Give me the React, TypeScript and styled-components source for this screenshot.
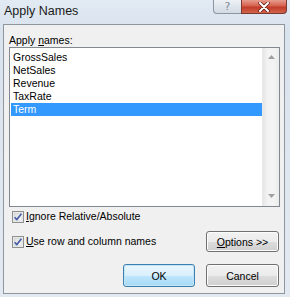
import React, { useState } from "react";
import styled, { createGlobalStyle } from "styled-components";

const GlobalStyle = createGlobalStyle`
  html, body {
    margin: 0;
    padding: 0;
    background: #ffffff;
  }
  * {
    box-sizing: border-box;
  }
`;

const names = ["GrossSales", "NetSales", "Revenue", "TaxRate", "Term"];

const Window = styled.div`
  width: 290px;
  height: 297px;
  display: flex;
  flex-direction: column;
  background: linear-gradient(180deg, #e2eaf3 0%, #d9e3ee 30px, #e3e9f0 100%);
  font-family: "Liberation Sans", Arial, sans-serif;
  font-size: 10.5px;
  color: #000;
`;

const TitleBar = styled.div`
  height: 24px;
  display: flex;
  justify-content: space-between;
  align-items: flex-start;
  flex-shrink: 0;
`;

const Title = styled.span`
  padding: 4px 0 0 4px;
  font-size: 12.5px;
  line-height: 15px;
  color: #1a1a1a;
`;

const CaptionButtons = styled.div`
  display: flex;
  margin-right: 3px;
`;

const HelpButton = styled.div`
  width: 28px;
  height: 14px;
  border: 1px solid #8c96a3;
  border-top: none;
  border-right: none;
  border-bottom-left-radius: 4px;
  background: linear-gradient(180deg, #eef2f6 0%, #dfe5ec 50%, #d2dae3 100%);
  color: #7d8996;
  font-size: 11px;
  line-height: 13px;
  text-align: center;
  font-family: "DejaVu Sans", sans-serif;
`;

const CloseButton = styled.div`
  width: 46px;
  height: 14px;
  border: 1px solid #7a3a33;
  border-top: none;
  border-bottom-right-radius: 4px;
  background: linear-gradient(180deg, #e69c8e 0%, #d6614f 45%, #c23b29 55%, #d0664d 100%);
  display: flex;
  align-items: center;
  justify-content: center;
`;

const Client = styled.div`
  flex: 1;
  margin: 0 5px 3px 3px;
  border: 1px solid #8e969f;
  background: #f0f0f0;
  padding: 9px 4px 0 5px;
  display: flex;
  flex-direction: column;
`;

const Label = styled.div`
  height: 13px;
  line-height: 13px;
`;

const Key = styled.span`
  text-decoration: underline;
  text-underline-offset: 1px;
`;

const ListBox = styled.div`
  height: 160px;
  border: 1px solid #828790;
  background: #ffffff;
  display: flex;
`;

const Items = styled.div`
  flex: 1;
  padding: 3px 0 0 1px;
`;

const Item = styled.div<{ $selected?: boolean }>`
  height: 13px;
  line-height: 13px;
  padding-left: 2px;
  background: ${(p) => (p.$selected ? "#3399ff" : "transparent")};
  color: ${(p) => (p.$selected ? "#ffffff" : "#000000")};
  cursor: default;
`;

const ScrollBar = styled.div`
  width: 17px;
  display: flex;
  flex-direction: column;
  justify-content: space-between;
  align-items: center;
  background: linear-gradient(90deg, #e6e6e6 0%, #f3f3f3 30%, #f3f3f3 70%, #ebebeb 100%);
  border-left: 1px solid #e9e9e9;
  padding: 7px 0 8px;
`;

const CheckRow = styled.div<{ $top: number }>`
  display: flex;
  align-items: center;
  justify-content: space-between;
  margin-top: ${(p) => p.$top}px;
  margin-right: 1px;
`;

const CheckLabel = styled.label`
  display: flex;
  align-items: center;
  gap: 2px;
  margin-left: 3px;
  height: 13px;
  line-height: 13px;
`;

const Button = styled.button<{ $default?: boolean; $h?: number; $w?: number }>`
  width: ${(p) => p.$w ?? 73}px;
  height: ${(p) => p.$h ?? 23}px;
  padding: 0;
  border: 1px solid ${(p) => (p.$default ? "#3c7fb1" : "#707070")};
  border-radius: 3px;
  background: ${(p) =>
    p.$default
      ? "linear-gradient(180deg, #eaf6fd 0%, #d9f0fc 50%, #bee6fd 51%, #a7d9f5 100%)"
      : "linear-gradient(180deg, #f2f2f2 0%, #ebebeb 50%, #dddddd 51%, #cfcfcf 100%)"};
  box-shadow: inset 0 0 0 1px ${(p) => (p.$default ? "#c4e5f6" : "#fcfcfc")};
  font-family: "Liberation Sans", Arial, sans-serif;
  font-size: 10.5px;
  color: #000;
`;

const ButtonRow = styled.div`
  display: flex;
  justify-content: flex-end;
  gap: 11px;
  margin-top: 12px;
  margin-right: 1px;
`;

const CheckBox = ({ checked }: { checked: boolean }) => (
  <svg width="12" height="12" viewBox="0 0 12 12">
    <defs>
      <linearGradient id="cbg" x1="0" y1="0" x2="1" y2="1">
        <stop offset="0" stopColor="#dcdcdc" />
        <stop offset="1" stopColor="#fbfbfb" />
      </linearGradient>
    </defs>
    <rect x="0.5" y="0.5" width="11" height="11" fill="#f4f4f4" stroke="#8e8f8f" />
    <rect x="2" y="2" width="8" height="8" fill="url(#cbg)" stroke="#c6c9cd" strokeWidth="0.6" />
    {checked && (
      <path d="M2.6 6.2 L4.8 8.6 L9.4 2.8" fill="none" stroke="#4a62a8" strokeWidth="1.7" strokeLinejoin="round" />
    )}
  </svg>
);

const Arrow = ({ up }: { up?: boolean }) => (
  <svg width="7" height="4" viewBox="0 0 7 4">
    <path d={up ? "M0 4 L3.5 0 L7 4 Z" : "M0 0 L7 0 L3.5 4 Z"} fill="#a0a0a0" />
  </svg>
);

export default function App() {
  const [selected, setSelected] = useState("Term");
  return (
    <>
      <GlobalStyle />
      <Window>
        <TitleBar>
          <Title>Apply Names</Title>
          <CaptionButtons>
            <HelpButton>?</HelpButton>
            <CloseButton>
              <svg width="12" height="10" viewBox="0 0 12 10">
                <path d="M2 1 L10 9 M10 1 L2 9" stroke="#5a1a12" strokeWidth="3.4" strokeLinecap="round" />
                <path d="M2 1 L10 9 M10 1 L2 9" stroke="#ffffff" strokeWidth="2" strokeLinecap="round" />
              </svg>
            </CloseButton>
          </CaptionButtons>
        </TitleBar>
        <Client>
          <Label>
            Apply <Key>n</Key>ames:
          </Label>
          <ListBox>
            <Items>
              {names.map((n) => (
                <Item key={n} $selected={n === selected} onClick={() => setSelected(n)}>
                  {n}
                </Item>
              ))}
            </Items>
            <ScrollBar>
              <Arrow up />
              <Arrow />
            </ScrollBar>
          </ListBox>
          <CheckRow $top={3}>
            <CheckLabel>
              <CheckBox checked />
              <span>
                <Key>I</Key>gnore Relative/Absolute
              </span>
            </CheckLabel>
          </CheckRow>
          <CheckRow $top={8}>
            <CheckLabel>
              <CheckBox checked />
              <span>
                <Key>U</Key>se row and column names
              </span>
            </CheckLabel>
            <Button $h={21}>
              <Key>O</Key>ptions &gt;&gt;
            </Button>
          </CheckRow>
          <ButtonRow>
            <Button $default $w={72}>
              OK
            </Button>
            <Button>Cancel</Button>
          </ButtonRow>
        </Client>
      </Window>
    </>
  );
}
